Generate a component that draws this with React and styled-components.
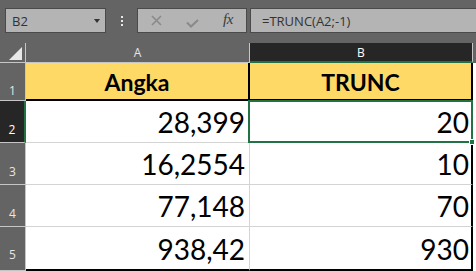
import React from 'react';
import styled, { createGlobalStyle } from 'styled-components';

const GlobalStyle = createGlobalStyle`
  html, body {
    margin: 0;
    padding: 0;
    background: #ffffff;
  }
  * {
    box-sizing: border-box;
  }
`;

const green = '#217346';
const chrome = '#646464';
const field = '#b4b4b4';
const fieldLine = '#4a4a4a';
const headLine = '#c6c6c6';
const grid = '#d4d4d4';

const Window = styled.div`
  width: 476px;
  height: 271px;
  overflow: hidden;
  background: ${ chrome };
  display: flex;
  flex-direction: column;
`;

const FormulaBar = styled.div`
  height: 43px;
  flex: none;
  display: flex;
  align-items: flex-start;
  padding: 8px 0 0 5px;
`;

const NameBox = styled.div`
  width: 101px;
  height: 25px;
  flex: none;
  display: flex;
  align-items: center;
  justify-content: space-between;
  padding: 0 5px 0 6px;
  background: ${ field };
  border: 1px solid ${ fieldLine };
  font: 13px "Open Sans", sans-serif;
  color: #333333;
`;

const Caret = styled.span`
  width: 0;
  height: 0;
  border-left: 3.5px solid transparent;
  border-right: 3.5px solid transparent;
  border-top: 4px solid #333333;
`;

const Grip = styled.div`
  width: 31px;
  height: 25px;
  flex: none;
  display: flex;
  flex-direction: column;
  align-items: center;
  justify-content: center;
  gap: 2px;
`;

const Dot = styled.span`
  width: 2px;
  height: 2px;
  background: #e8e8e8;
`;

const ButtonGroup = styled.div`
  width: 110px;
  height: 25px;
  flex: none;
  display: flex;
  background: ${ field };
  border: 1px solid ${ fieldLine };
`;

const BarButton = styled.div`
  flex: 1;
  display: flex;
  align-items: center;
  justify-content: center;
`;

const Fx = styled.span`
  font: italic 15px "Liberation Serif", serif;
  color: #3a3a3a;
  letter-spacing: -0.5px;
  margin-top: -2px;
`;

const FormulaInput = styled.div`
  flex: 1;
  height: 25px;
  margin: 0 -2px 0 3px;
  display: flex;
  align-items: center;
  padding-left: 11px;
  background: ${ field };
  border: 1px solid ${ fieldLine };
  font: 13px "Open Sans", sans-serif;
  color: #333333;
`;

const Row = styled.div`
  display: flex;
  flex: none;
  height: ${ p => p.$h }px;
`;

const Corner = styled.div`
  width: 26px;
  flex: none;
  border-right: 1px solid ${ headLine };
  border-bottom: 1px solid ${ headLine };
`;

const ColHead = styled.div`
  width: ${ p => p.$w }px;
  flex: none;
  display: flex;
  align-items: center;
  justify-content: center;
  background: ${ p => p.$selected ? '#262626' : chrome };
  color: ${ p => p.$selected ? '#ffffff' : '#e6e6e6' };
  border-right: 1px solid ${ headLine };
  border-bottom: ${ p => p.$selected ? `2px solid ${ green }` : `1px solid ${ headLine }` };
  font: 12px "Open Sans", sans-serif;
`;

const HeadFill = styled.div`
  flex: 1;
  background: ${ chrome };
`;

const RowHead = styled.div`
  width: 26px;
  flex: none;
  display: flex;
  align-items: flex-end;
  justify-content: center;
  padding-bottom: ${ p => p.$pb }px;
  background: ${ p => p.$selected ? '#262626' : chrome };
  color: ${ p => p.$selected ? '#ffffff' : '#e6e6e6' };
  border-right: ${ p => p.$selected ? `2px solid ${ green }` : `1px solid ${ headLine }` };
  border-bottom: 1px solid ${ headLine };
  font: 12px/12px "Open Sans", sans-serif;
`;

const Cell = styled.div`
  position: relative;
  width: ${ p => p.$w }px;
  flex: none;
  display: flex;
  align-items: center;
  justify-content: ${ p => p.$head ? 'center' : 'flex-end' };
  padding: ${ p => p.$head ? '2px 0 0 0' : `1px ${ p.$edge ? 2 : 4 }px 0 0` };
  background: ${ p => p.$head ? '#ffd966' : '#ffffff' };
  border-right: ${ p => p.$head || p.$edge ? '2px solid #000000' : `1px solid ${ grid }` };
  border-bottom: ${ p => p.$head || p.$last ? '2px solid #000000' : `1px solid ${ grid }` };
  font-family: Lato, "Open Sans", sans-serif;
  font-size: ${ p => p.$head ? 23 : 28 }px;
  font-weight: ${ p => p.$head ? 700 : 400 };
  line-height: 1;
  color: #000000;
`;

const CellFill = styled.div`
  flex: 1;
  background: #ffffff;
`;

const Selection = styled.div`
  position: absolute;
  top: -1px;
  left: -2px;
  right: -2px;
  bottom: -1px;
  border: 2px solid ${ green };
  pointer-events: none;
  z-index: 2;
`;

const Handle = styled.span`
  position: absolute;
  right: -4px;
  bottom: -4px;
  width: 6px;
  height: 6px;
  background: ${ green };
  border: 1px solid #ffffff;
`;

const CancelIcon = () => (
  <svg width="11" height="11" viewBox="0 0 11 11">
    <path d="M1 1 L10 10 M10 1 L1 10" stroke="#8a8a8a" strokeWidth="1.6" fill="none" />
  </svg>
);

const EnterIcon = () => (
  <svg width="13" height="9" viewBox="0 0 13 9" style={{ marginTop: 5 }}>
    <path d="M1 3.5 L5 7.5 L12 1" stroke="#8a8a8a" strokeWidth="2" fill="none" />
  </svg>
);

const CornerMark = () => (
  <svg width="26" height="20" viewBox="0 0 26 20">
    <polygon points="22,4 22,17 9,17" fill="#e8e8e8" />
  </svg>
);

const rows = [
  { n: 2, a: '28,399', b: '20', selected: true },
  { n: 3, a: '16,2554', b: '10' },
  { n: 4, a: '77,148', b: '70' },
  { n: 5, a: '938,42', b: '930', last: true },
];

export default function App() {
  return (
    <>
      <GlobalStyle />
      <Window>
        <FormulaBar>
          <NameBox>
            <span>B2</span>
            <Caret />
          </NameBox>
          <Grip>
            <Dot />
            <Dot />
            <Dot />
          </Grip>
          <ButtonGroup>
            <BarButton><CancelIcon /></BarButton>
            <BarButton><EnterIcon /></BarButton>
            <BarButton><Fx>fx</Fx></BarButton>
          </ButtonGroup>
          <FormulaInput>=TRUNC(A2;-1)</FormulaInput>
        </FormulaBar>

        <Row $h={ 20 }>
          <Corner><CornerMark /></Corner>
          <ColHead $w={ 224 }>A</ColHead>
          <ColHead $w={ 223 } $selected>B</ColHead>
          <HeadFill />
        </Row>

        <Row $h={ 38 }>
          <RowHead $pb={ 3 }>1</RowHead>
          <Cell $w={ 224 } $head>Angka</Cell>
          <Cell $w={ 223 } $head>TRUNC</Cell>
          <CellFill />
        </Row>

        { rows.map(r => (
          <Row key={ r.n } $h={ r.last ? 44 : 42 }>
            <RowHead $pb={ r.last ? 9 : 6 } $selected={ r.selected }>{ r.n }</RowHead>
            <Cell $w={ 224 } $last={ r.last }>{ r.a }</Cell>
            <Cell $w={ 223 } $edge $last={ r.last }>
              { r.b }
              { r.selected && <Selection><Handle /></Selection> }
            </Cell>
            <CellFill />
          </Row>
        )) }
      </Window>
    </>
  );
}
